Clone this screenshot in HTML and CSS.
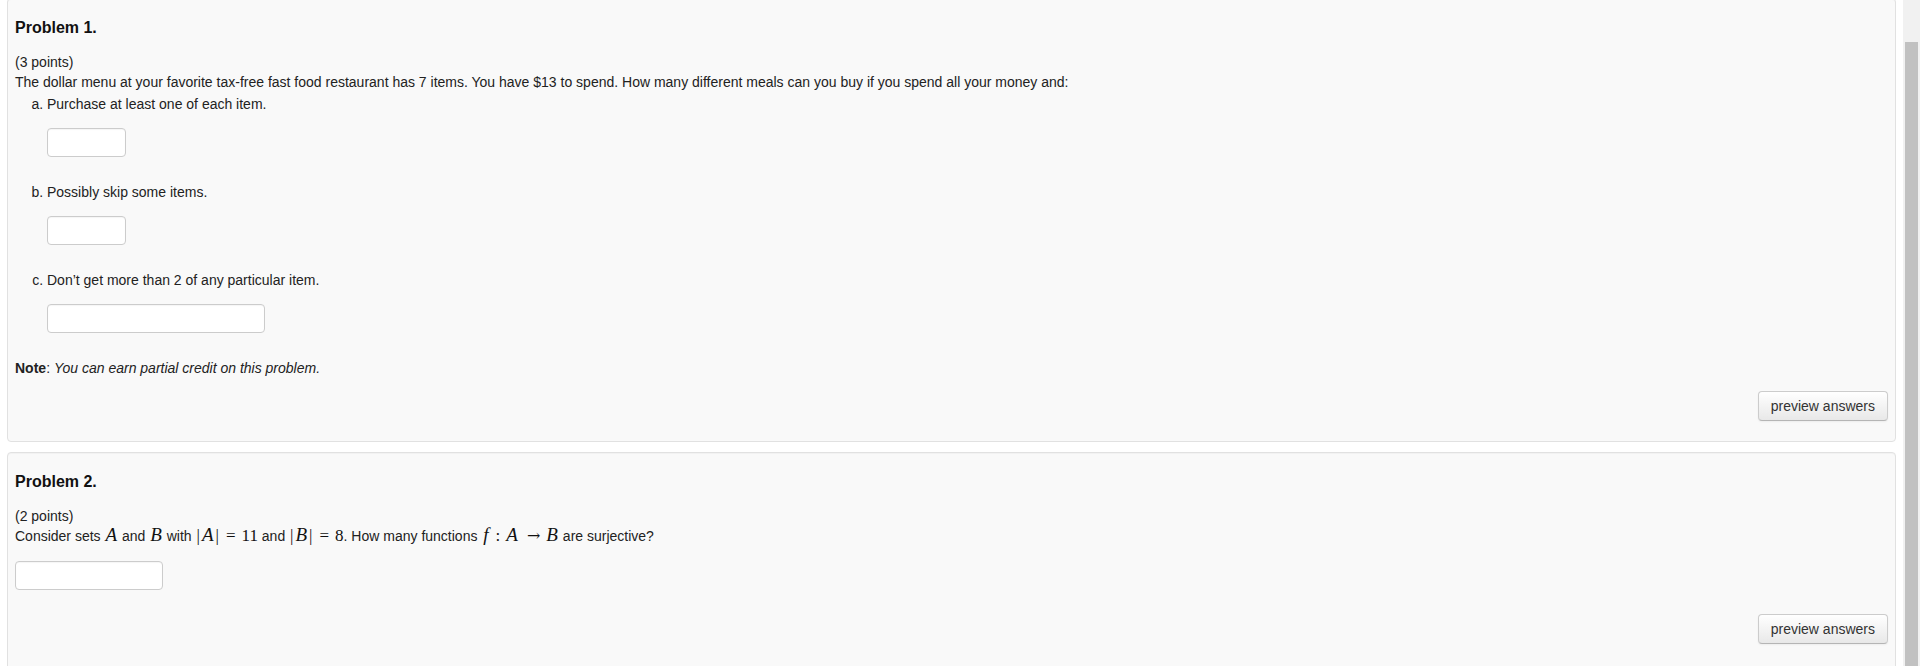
FILE: index.html
```html
<!DOCTYPE html>
<html lang="en">
<head>
<meta charset="utf-8">
<title>Problems</title>
<link rel="stylesheet" href="styles.css">
</head>
<body>
<div class="viewport">
  <main class="page">
    <section class="problem problem-first">
      <h3 class="problem-title">Problem 1.</h3>
      <div class="points">(3 points)</div>
      <div class="statement">The dollar menu at your favorite tax-free fast food restaurant has 7 items. You have $13 to spend. How many different meals can you buy if you spend all your money and:</div>
      <ol class="parts">
        <li>
          <div class="part-text">Purchase at least one of each item.</div>
          <div class="answer"><input class="answer-input w-sm" type="text"></div>
        </li>
        <li>
          <div class="part-text">Possibly skip some items.</div>
          <div class="answer"><input class="answer-input w-sm" type="text"></div>
        </li>
        <li>
          <div class="part-text">Don’t get more than 2 of any particular item.</div>
          <div class="answer"><input class="answer-input w-lg" type="text"></div>
        </li>
      </ol>
      <div class="note"><b>Note</b>: <i>You can earn partial credit on this problem.</i></div>
      <div class="actions"><button class="btn" type="button">preview answers</button></div>
    </section>

    <section class="problem">
      <h3 class="problem-title">Problem 2.</h3>
      <div class="points">(2 points)</div>
      <div class="statement">Consider sets <span class="math"><i class="mi">A</i></span> and <span class="math"><i class="mi">B</i></span> with <span class="math"><span class="bar">|</span><i class="mi">A</i><span class="bar">|</span><span class="rel">=</span><span class="mn">11</span></span> and <span class="math"><span class="bar">|</span><i class="mi">B</i><span class="bar">|</span><span class="rel">=</span><span class="mn">8</span></span>. How many functions <span class="math"><i class="mi mi-f">f</i><span class="rel rel-colon">:</span><i class="mi">A</i><span class="rel arrow">→</span><i class="mi">B</i></span> are surjective?</div>
      <div class="answer answer-single"><input class="answer-input w-md" type="text"></div>
      <div class="actions actions-second"><button class="btn" type="button">preview answers</button></div>
    </section>
  </main>
  <div class="scrollbar"><div class="scroll-thumb"></div></div>
</div>
</body>
</html>
```

FILE: styles.css
```css
html, body {
  margin: 0;
  padding: 0;
  height: 100%;
  overflow: hidden;
  background: #ffffff;
}

body {
  font-family: "Liberation Sans", Arial, sans-serif;
  font-size: 14px;
  line-height: 20px;
  color: #222222;
}

.viewport {
  display: flex;
  height: 666px;
  overflow: hidden;
}

.page {
  flex: 1;
  min-width: 0;
  overflow: hidden;
  display: flex;
  flex-direction: column;
}

.problem {
  flex: none;
  margin: 10px 7px 0 7px;
  padding: 19px 7px 20px 7px;
  background: #f9f9f9;
  border: 1px solid #e1e1e1;
  border-radius: 4px;
  box-shadow: inset 0 1px 1px rgba(0, 0, 0, 0.03);
  display: flex;
  flex-direction: column;
}

.problem-first {
  margin-top: -2px;
}

.problem-title {
  margin: 0;
  font-size: 16px;
  line-height: 20px;
  font-weight: bold;
  color: #111111;
}

.points {
  margin-top: 14px;
}

.statement {
  margin: 0;
}

.parts {
  margin: 2px 0 0 0;
  padding-left: 32px;
  list-style-type: lower-alpha;
}

.part-text {
  margin: 0;
}

.answer {
  margin: 14px 0 25px 0;
  display: flex;
}

.answer-single {
  margin: 15px 0 0 0;
}

.answer-input {
  box-sizing: border-box;
  height: 29px;
  padding: 4px 6px;
  margin: 0;
  border: 1px solid #cccccc;
  border-radius: 4px;
  background: #ffffff;
  font-family: "Liberation Sans", Arial, sans-serif;
  font-size: 14px;
  box-shadow: inset 0 1px 1px rgba(0, 0, 0, 0.04);
}

.w-sm { width: 79px; }
.w-md { width: 148px; }
.w-lg { width: 218px; }

.note {
  margin-top: 0;
}

.actions {
  display: flex;
  justify-content: flex-end;
  margin-top: 13px;
}

.actions-second {
  margin-top: 24px;
  margin-bottom: 40px;
}

.btn {
  box-sizing: border-box;
  height: 30px;
  padding: 4px 12px;
  font-family: "Liberation Sans", Arial, sans-serif;
  font-size: 14px;
  line-height: 20px;
  color: #333333;
  background: linear-gradient(to bottom, #ffffff, #e8e8e8);
  border: 1px solid #cccccc;
  border-bottom-color: #b5b5b5;
  border-radius: 4px;
  box-shadow: inset 0 1px 0 rgba(255, 255, 255, 0.2), 0 1px 2px rgba(0, 0, 0, 0.05);
}

.math {
  font-family: "Liberation Serif", "DejaVu Serif", serif;
  font-size: 17px;
  line-height: 0;
  white-space: nowrap;
  color: #111111;
}

.mi {
  font-style: italic;
  font-size: 19px;
  padding: 0 1px;
}

.mi-f {
  padding: 0 2px;
}

.mn {
  font-size: 17px;
}

.bar {
  padding: 0 1px;
}

.rel {
  margin: 0 6px;
}

.rel-colon {
  margin: 0 5px;
}

.arrow {
  font-family: "DejaVu Serif", serif;
  font-size: 16px;
  margin: 0 5px 0 8px;
}

.scrollbar {
  flex: none;
  width: 17px;
  background: #f1f1f1;
  display: flex;
  flex-direction: column;
  align-items: center;
}

.scroll-thumb {
  margin-top: 42px;
  width: 13px;
  flex: 1;
  background: #c1c1c1;
}
```
